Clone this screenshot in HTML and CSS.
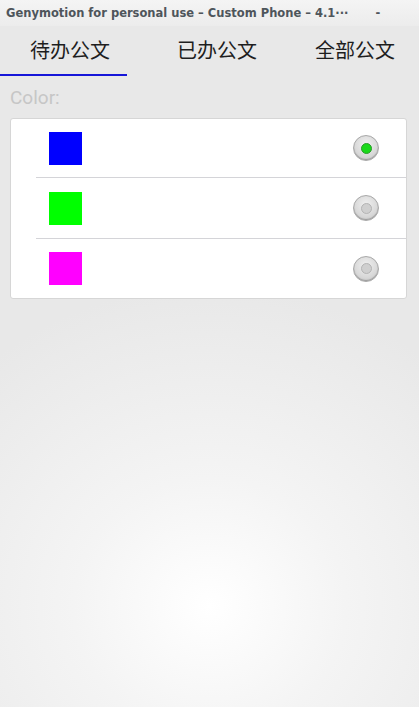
FILE: index.html
```html
<!DOCTYPE html>
<html>
<head>
<meta charset="utf-8">
<link rel="stylesheet" href="styles.css">
</head>
<body>
<div class="titlebar">
  <span class="title">Genymotion for personal use – Custom Phone – 4.1···</span>
  <span class="minimize">-</span>
</div>
<div class="screen">
  <div class="tabs">
    <div class="tab">待办公文</div>
    <div class="tab">已办公文</div>
    <div class="tab">全部公文</div>
  </div>
  <div class="indicator"></div>
  <div class="label">Color:</div>
  <div class="card">
    <div class="row">
      <div class="swatch blue"></div>
      <div class="radio checked"><div class="dot"></div></div>
    </div>
    <div class="row">
      <div class="swatch green"></div>
      <div class="radio"><div class="dot"></div></div>
    </div>
    <div class="row">
      <div class="swatch magenta"></div>
      <div class="radio"><div class="dot"></div></div>
    </div>
  </div>
</div>
</body>
</html>
```
FILE: styles.css
```css
html, body {
  margin: 0;
  padding: 0;
  height: 100%;
}
body {
  width: 419px;
  height: 707px;
  overflow: hidden;
  display: flex;
  flex-direction: column;
  font-family: Roboto, "Noto Sans", sans-serif;
}
.titlebar {
  height: 26px;
  flex: none;
  display: flex;
  align-items: center;
  padding-left: 6px;
  box-sizing: border-box;
  background: linear-gradient(#f4f4f4, #ececec);
  color: #4e555b;
  font-family: "DejaVu Sans", sans-serif;
  font-weight: bold;
  font-size: 11.5px;
}
.title {
  flex: none;
}
.minimize {
  margin-left: 27px;
}
.screen {
  flex: 1;
  background: radial-gradient(ellipse 340px 320px at 210px 580px, #ffffff 0%, #f4f4f4 40%, #e8e8e8 100%);
  display: flex;
  flex-direction: column;
}
.tabs {
  display: grid;
  grid-template-columns: 147px 138px 1fr;
  height: 48px;
  align-items: center;
}
.tab {
  padding-left: 30px;
  font-family: "Noto Sans CJK SC", sans-serif;
  font-size: 20px;
  color: #1e1e1e;
  line-height: 1;
  margin-top: -1px;
}
.indicator {
  width: 127px;
  height: 2px;
  background: #1616d8;
}
.label {
  margin: 11px 0 0 10px;
  font-size: 19px;
  color: #c6c6c6;
  line-height: 22px;
}
.card {
  margin: 9px 12px 0 10px;
  background: #fff;
  border: 1px solid #d6d6d6;
  border-radius: 3px;
  display: flex;
  flex-direction: column;
}
.row {
  height: 58px;
  display: flex;
  align-items: center;
  justify-content: space-between;
  padding: 0 27px 0 13px;
  margin-left: 25px;
  border-bottom: 1px solid #d4d4d8;
}
.row:nth-child(2) {
  height: 60px;
}
.row:last-child {
  border-bottom: none;
  height: 59px;
}
.swatch {
  width: 33px;
  height: 33px;
}
.blue { background: #0000ff; }
.green { background: #00ff00; }
.magenta { background: #ff00ff; }
.radio {
  width: 26px;
  height: 26px;
  border-radius: 50%;
  box-sizing: border-box;
  border: 1px solid #a8a8a8;
  background: radial-gradient(circle at 50% 35%, #f0f0f0 0%, #d8d8d8 60%, #c4c4c4 100%);
  display: flex;
  align-items: center;
  justify-content: center;
  box-shadow: inset 0 -1px 1px #9a9a9a;
}
.dot {
  width: 11px;
  height: 11px;
  border-radius: 50%;
  box-sizing: border-box;
  border: 1px solid #b4b4b4;
  background: #cfcfcf;
}
.checked .dot {
  background: #19d919;
  border-color: #2a9a2a;
}
```
